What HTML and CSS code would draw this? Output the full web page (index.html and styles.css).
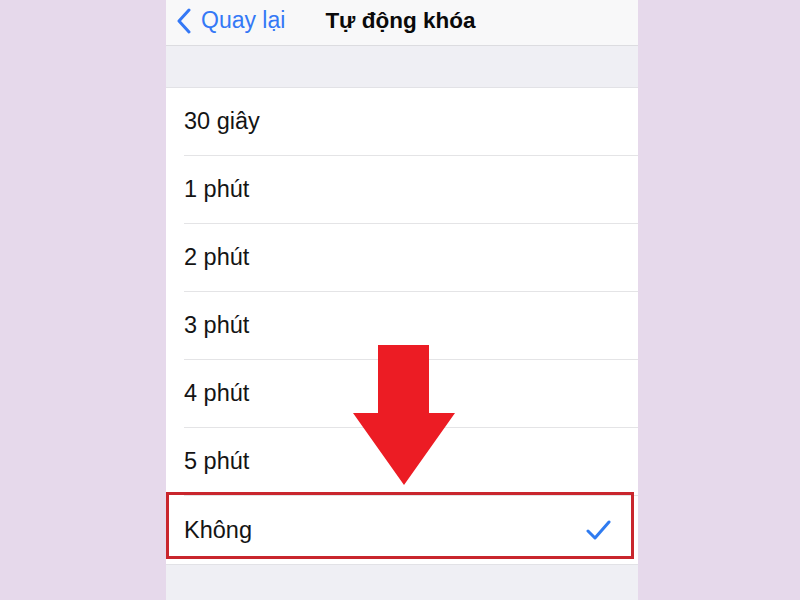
FILE: index.html
```html
<!DOCTYPE html>
<html lang="vi">
<head>
<meta charset="utf-8">
<link rel="stylesheet" href="styles.css">
</head>
<body>
<div class="phone">
  <header class="nav">
    <div class="back">
      <svg class="chev" width="16" height="26" viewBox="0 0 16 26"><path d="M13 2 L3 13 L13 24" fill="none" stroke="#3478f6" stroke-width="3" stroke-linecap="round" stroke-linejoin="round"/></svg>
      <span>Quay lại</span>
    </div>
    <div class="title">Tự động khóa</div>
  </header>
  <div class="gap"></div>
  <ul class="list">
    <li class="row"><span>30 giây</span></li>
    <li class="row"><span>1 phút</span></li>
    <li class="row"><span>2 phút</span></li>
    <li class="row"><span>3 phút</span></li>
    <li class="row"><span>4 phút</span></li>
    <li class="row"><span>5 phút</span></li>
    <li class="row last"><span>Không</span>
      <svg class="check" width="26" height="22" viewBox="0 0 26 22"><path d="M2 12 L9 19 L23 3" fill="none" stroke="#2f7bf0" stroke-width="3" stroke-linecap="round" stroke-linejoin="round"/></svg>
    </li>
  </ul>
  <div class="footer"></div>
  <div class="highlight"></div>
  <svg class="arrow" width="104" height="142" viewBox="0 0 104 142"><polygon points="25,0 76,0 76,68 102,68 51,140 0,68 25,68" fill="#ec1c24"/></svg>
</div>
</body>
</html>
```
FILE: styles.css
```css
html, body {
  margin: 0;
  padding: 0;
  height: 100%;
}
body {
  background: #e6d9eb;
  display: flex;
  justify-content: center;
  font-family: "Liberation Sans", Arial, sans-serif;
  overflow: hidden;
}
.phone {
  position: relative;
  width: 472px;
  margin-left: 4px;
  height: 600px;
  background: #efeff4;
  display: flex;
  flex-direction: column;
}
.nav {
  height: 41px;
  padding-bottom: 4px;
  background: #f8f8f9;
  border-bottom: 1px solid #dcdce0;
  display: flex;
  align-items: center;
  padding-left: 10px;
  box-sizing: content-box;
}
.back {
  display: flex;
  align-items: center;
  gap: 9px;
  color: #3478f6;
  font-size: 23px;
}
.chev {
  display: block;
}
.title {
  margin-left: 40px;
  font-size: 22.5px;
  font-weight: 700;
  color: #0a0a0a;
}
.gap {
  height: 41px;
  border-bottom: 1px solid #e2e2e6;
}
.list {
  list-style: none;
  margin: 0;
  padding: 0;
  background: #fff;
}
.row {
  height: 67px;
  margin-left: 18px;
  padding-right: 26px;
  border-bottom: 1px solid #e4e4e6;
  display: flex;
  align-items: center;
  justify-content: space-between;
  font-size: 23.5px;
  color: #141414;
}
.row.last {
  border-bottom: none;
  height: 68px;
}
.check {
  display: block;
}
.footer {
  flex: 1;
  border-top: 1px solid #e2e2e6;
}
.highlight {
  position: absolute;
  left: 0;
  top: 492px;
  width: 468px;
  height: 67px;
  box-sizing: border-box;
  border: 3px solid #c9262d;
}
.arrow {
  position: absolute;
  left: 187px;
  top: 345px;
}
```
